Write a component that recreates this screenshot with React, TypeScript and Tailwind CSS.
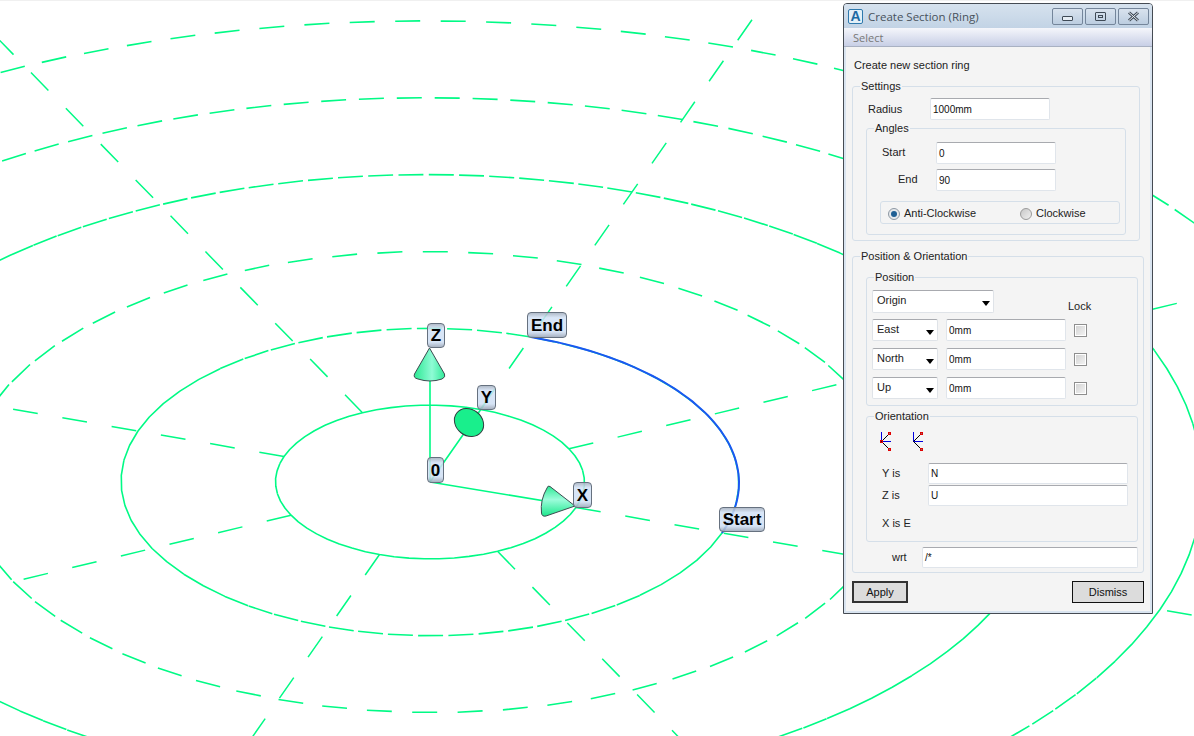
import React from "react";

// projected axes of the ring plane, per unit of radius
const CX = 430;
const CY = 482;
const EX = [146, 25.5];
const EY = [50.5, -72.5];

function pt(r: number, t: number) {
  return [
    CX + r * (EX[0] * Math.cos(t) + EY[0] * Math.sin(t)),
    CY + r * (EX[1] * Math.cos(t) + EY[1] * Math.sin(t)),
  ];
}

// every polyline segment restarts the 25px dash
function ringPath(r: number, n: number) {
  const dt = (Math.PI * 2) / n;
  let d = "";
  for (let k = 0; k < n; k++) {
    const a = pt(r, k * dt);
    const b = pt(r, (k + 1) * dt);
    const len = Math.hypot(b[0] - a[0], b[1] - a[1]);
    const f = len <= 25 ? 1 : 25 / len;
    d += `M${a[0].toFixed(1)} ${a[1].toFixed(1)}L${(a[0] + (b[0] - a[0]) * f).toFixed(1)} ${(a[1] + (b[1] - a[1]) * f).toFixed(1)}`;
  }
  return d;
}

function arcPath(r: number, from: number, to: number) {
  let d = "";
  for (let i = 0; i <= 60; i++) {
    const p = pt(r, from + ((to - from) * i) / 60);
    d += `${i ? "L" : "M"}${p[0].toFixed(1)} ${p[1].toFixed(1)}`;
  }
  return d;
}

const rings = [
  { r: 1, n: 64 },
  { r: 2, n: 64 },
  { r: 3, n: 64 },
  { r: 4, n: 128 },
  { r: 5, n: 128 },
  { r: 6, n: 128 },
];

function Scene() {
  return (
    <svg className="absolute inset-0" width={1194} height={736} viewBox="0 0 1194 736" fill="none">
      <defs>
        <linearGradient id="coneZ" x1="0" y1="0" x2="1" y2="0">
          <stop offset="0" stopColor="#2be993" />
          <stop offset="0.58" stopColor="#8ffbd5" />
          <stop offset="1" stopColor="#30ea98" />
        </linearGradient>
        <linearGradient id="coneX" x1="0" y1="0" x2="0" y2="1">
          <stop offset="0" stopColor="#2be993" />
          <stop offset="0.45" stopColor="#9dfcdb" />
          <stop offset="1" stopColor="#1ce88c" />
        </linearGradient>
      </defs>
      {rings.map((g) => (
        <path key={g.r} d={ringPath(g.r, g.n)} stroke="#00fa85" strokeWidth={1.6} />
      ))}
      {[0, 1, 2, 3, 4, 5, 6, 7].map((i) => {
        const t = (i * Math.PI) / 4;
        const a = pt(1, t);
        const b = pt(8, t);
        return (
          <line key={i} x1={a[0]} y1={a[1]} x2={b[0]} y2={b[1]} stroke="#00fa85" strokeWidth={1.5} strokeDasharray="25 25" />
        );
      })}
      <path d={arcPath(2, 0, Math.PI / 2)} stroke="#1b56f2" strokeWidth={2} />
      <path d="M430 482V350M430 482L486 402M430 482L575 506" stroke="#00fa85" strokeWidth={1.6} />
      <path d="M429.5 348L414.5 374Q413 378 418 379Q430 383 442 379Q446 377 444.5 374Z" fill="url(#coneZ)" stroke="#3d4a50" strokeWidth={1} />
      <ellipse cx={469} cy={422.5} rx={15.5} ry={13} transform="rotate(38 469 422.5)" fill="#19ef8c" stroke="#2f3b3e" strokeWidth={1} />
      <path d="M575 506L550 486.5Q548 485 547 488Q540 500 541.5 513Q542 517 546 516Z" fill="url(#coneX)" stroke="#3d4a50" strokeWidth={1} />
    </svg>
  );
}

const tagClass =
  "absolute flex items-center justify-center rounded-[4px] border border-[#66717f] bg-[linear-gradient(rgba(169,180,195,0.9)_0%,rgba(211,226,246,0.85)_20%,rgba(207,223,244,0.85)_78%,rgba(159,170,187,0.9)_100%)] font-['Liberation_Sans',sans-serif] text-[17px] leading-none font-bold text-black";

function Field({ className, children }: { className: string; children?: React.ReactNode }) {
  return (
    <div className={`flex items-center rounded-[2px] border border-[#e0e5eb] border-t-[#a8aaaf] bg-white px-[2px] text-[10px] text-[#111] ${className}`}>
      {children}
    </div>
  );
}

function Combo({ className, label }: { className: string; label: string }) {
  return (
    <div className={`flex items-start justify-between rounded-[2px] border border-[#dfe3e8] border-t-[#a8aaaf] bg-white pt-[3px] pr-[3px] pl-[4px] ${className}`}>
      <span>{label}</span>
      <svg width={8} height={5} viewBox="0 0 8 5" className="mt-[7px]">
        <path d="M0 0H8L4 5Z" fill="#000" />
      </svg>
    </div>
  );
}

function Check() {
  return (
    <div className="ml-[8px] size-[13px] border border-[#8e8e8e] bg-[#fff] p-[1px]">
      <div className="size-full bg-[linear-gradient(135deg,#d4d4d4,#f2f2f2)]" />
    </div>
  );
}

function Group({ title, className, children }: { title: string; className: string; children: React.ReactNode }) {
  return (
    <fieldset className={`rounded-[3px] border border-[#d5dfe9] ${className}`}>
      <legend className="ml-[7px] h-[13px] px-[1px] leading-[13px] text-[#222]">{title}</legend>
      {children}
    </fieldset>
  );
}

function AxisIcon({ marked, className }: { marked: boolean; className?: string }) {
  return (
    <svg width={13} height={20} viewBox="0 0 13 20" fill="none" className={className}>
      <path d="M1.5 10.5V1M1.5 10.5H11" stroke="#0000e0" />
      <path d="M1.5 10.5L9.5 2.5M1.5 10.5L9.5 18.5" stroke="#000" />
      <rect x={8.5} y={1.5} width={2} height={2} stroke="#e00000" />
      <rect x={8.5} y={17.5} width={2} height={2} stroke="#e00000" />
      {marked && <rect x={0.5} y={9.5} width={2} height={2} stroke="#e00000" />}
    </svg>
  );
}

function Dialog() {
  return (
    <div className="absolute top-[3px] left-[843px] flex h-[611px] w-[310px] flex-col overflow-hidden rounded-t-[4px] border border-[#454b53] bg-[#d9e4f0] font-['Liberation_Sans',sans-serif] text-[11px] leading-[13px] text-[#222]">
      <div className="flex h-[24px] items-center bg-[linear-gradient(#d6e2ee,#c2d3e5)] pr-[3px] pl-[4px]">
        <div className="flex size-[15px] items-center justify-center rounded-[2px] border border-[#2f79ad] bg-[#e3f0f8] text-[14px] leading-none font-bold text-[#1c6aa3]">
          A
        </div>
        <span className="ml-[5px] font-['Open_Sans',sans-serif] text-[11.5px] text-[#48525c]">Create Section (Ring)</span>
        <div className="ml-auto flex gap-[2px]">
          <div className="flex h-[17px] w-[31px] items-end justify-center rounded-[2px] border border-[#74859a] bg-[linear-gradient(#d9e3ee,#bccde0)] pb-[3px]">
            <div className="h-[5px] w-[11px] rounded-[1px] border border-[#3f4a56] bg-[#e6edf4]" />
          </div>
          <div className="flex h-[17px] w-[31px] items-center justify-center rounded-[2px] border border-[#74859a] bg-[linear-gradient(#d9e3ee,#bccde0)]">
            <div className="flex h-[9px] w-[11px] items-center justify-center rounded-[1px] border border-[#3f4a56]">
              <div className="h-[3px] w-[5px] border border-[#3f4a56]" />
            </div>
          </div>
          <div className="flex h-[17px] w-[31px] items-center justify-center rounded-[2px] border border-[#74859a] bg-[linear-gradient(#d9e3ee,#bccde0)]">
            <svg width={13} height={11} viewBox="0 0 13 11" fill="none">
              <path d="M2 1.5L11 9.5M11 1.5L2 9.5" stroke="#3f4a56" strokeWidth={3} />
              <path d="M2 1.5L11 9.5M11 1.5L2 9.5" stroke="#e9eff5" strokeWidth={1} />
            </svg>
          </div>
        </div>
      </div>
      <div className="flex h-[19px] items-center border-b border-[#a9b1c2] bg-[linear-gradient(#f5f6fb,#c8cfe6)] pl-[9px] font-['Open_Sans',sans-serif] text-[11px] text-[#777]">
        Select
      </div>
      <div className="mx-[2px] mb-[2px] flex-1 bg-[#f4f4f4] pt-[12px] pl-[6px]">
        <div className="ml-[2px]">Create new section ring</div>

        <Group title="Settings" className="mt-[8px] w-[288px] pb-[5px]">
          <div className="mt-[5px] flex h-[22px] items-center">
            <span className="ml-[15px] w-[62px]">Radius</span>
            <Field className="h-[22px] w-[120px]">1000mm</Field>
          </div>
          <Group title="Angles" className="mt-[2px] ml-[13px] w-[260px] pb-[10px]">
            <div className="mt-[7px] flex h-[22px] items-center">
              <span className="ml-[15px] w-[54px] pb-[2px]">Start</span>
              <Field className="h-[22px] w-[120px]">0</Field>
            </div>
            <div className="mt-[5px] flex h-[22px] items-center">
              <span className="ml-[31px] w-[38px] pb-[2px]">End</span>
              <Field className="h-[22px] w-[120px]">90</Field>
            </div>
            <div className="mt-[10px] ml-[13px] flex h-[23px] w-[240px] items-center rounded-[3px] border border-[#d5dfe9] pt-[2px] pl-[7px]">
              <div className="flex size-[12px] items-center justify-center rounded-full border border-[#8d98a3] bg-[#e6e9ec]">
                <div className="size-[6px] rounded-full bg-[#1f5f94]" />
              </div>
              <span className="ml-[4px] w-[116px]">Anti-Clockwise</span>
              <div className="size-[12px] rounded-full border border-[#9a9a9a] bg-[linear-gradient(135deg,#c8c8c8,#f0f0f0)]" />
              <span className="ml-[4px]">Clockwise</span>
            </div>
          </Group>
        </Group>

        <Group title="Position & Orientation" className="mt-[9px] w-[292px] pb-[4px]">
          <Group title="Position" className="mt-[8px] ml-[13px] w-[272px] pb-[6px]">
            <div className="mt-[6px] flex h-[23px]">
              <Combo className="ml-[5px] h-[23px] w-[122px]" label="Origin" />
              <span className="mt-[10px] ml-[74px]">Lock</span>
            </div>
            {["East", "North", "Up"].map((axis, i) => (
              <div key={axis} className={i === 0 ? "mt-[6px] flex h-[22px] items-center" : "mt-[7px] flex h-[22px] items-center"}>
                <Combo className="ml-[5px] h-[22px] w-[66px]" label={axis} />
                <Field className="ml-[8px] h-[22px] w-[120px]">0mm</Field>
                <Check />
              </div>
            ))}
          </Group>
          <Group title="Orientation" className="mt-[4px] ml-[13px] w-[272px] pb-[11px]">
            <div className="mt-[8px] ml-[13px] flex">
              <AxisIcon marked />
              <AxisIcon marked={false} className="ml-[19px]" />
            </div>
            <div className="mt-[12px] flex h-[21px] items-center">
              <span className="ml-[15px] w-[46px]">Y is</span>
              <Field className="h-[21px] w-[200px]">N</Field>
            </div>
            <div className="mt-[1px] flex h-[21px] items-center">
              <span className="ml-[15px] w-[46px]">Z is</span>
              <Field className="h-[21px] w-[200px]">U</Field>
            </div>
            <div className="mt-[11px] ml-[15px]">X is E</div>
          </Group>
          <div className="mt-[5px] flex h-[21px] items-center">
            <span className="ml-[39px] w-[30px]">wrt</span>
            <Field className="h-[21px] w-[216px]">/*</Field>
          </div>
        </Group>

        <div className="mt-[8px] flex w-[292px] justify-between">
          <button className="h-[22px] w-[56px] border-2 border-[#333] bg-[#dcdcdc] text-[11px] text-[#111]">Apply</button>
          <button className="h-[22px] w-[72px] border border-[#111] bg-[#dcdcdc] text-[11px] text-[#111]">Dismiss</button>
        </div>
      </div>
    </div>
  );
}

export default function App() {
  return (
    <div className="relative h-[736px] w-[1194px] overflow-hidden bg-white">
      <div className="absolute inset-x-0 top-0 h-px bg-[#f0f0f0]" />
      <Scene />
      <div className={`${tagClass} top-[323px] left-[427px] h-[25px] w-[18px]`}>Z</div>
      <div className={`${tagClass} top-[385px] left-[477px] h-[25px] w-[19px]`}>Y</div>
      <div className={`${tagClass} top-[457px] left-[427px] h-[26px] w-[17px]`}>0</div>
      <div className={`${tagClass} top-[482px] left-[573px] h-[26px] w-[19px]`}>X</div>
      <div className={`${tagClass} top-[312px] left-[527px] h-[26px] w-[40px]`}>End</div>
      <div className={`${tagClass} top-[507px] left-[719px] h-[25px] w-[46px]`}>Start</div>
      <Dialog />
    </div>
  );
}
